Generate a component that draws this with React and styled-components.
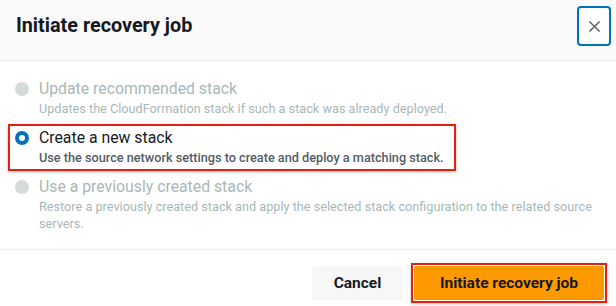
import React from "react";
import styled, { createGlobalStyle } from "styled-components";

const Global = createGlobalStyle`
  html, body { margin: 0; padding: 0; background: #ffffff; }
  body { font-family: Roboto, "Noto Sans", "Liberation Sans", sans-serif; -webkit-font-smoothing: antialiased; }
  * { box-sizing: border-box; }
`;

const Modal = styled.div`
  width: 616px;
  height: 306px;
  display: flex;
  flex-direction: column;
  background: #ffffff;
`;

const Header = styled.div`
  height: 61px;
  flex: none;
  display: flex;
  align-items: flex-start;
  justify-content: space-between;
  padding: 6px 5px 0 16px;
  background: #fafafa;
  border-bottom: 1px solid #eaeded;
`;

const Title = styled.h2`
  margin: 0;
  padding-top: 8px;
  font-size: 19.8px;
  line-height: 24px;
  font-weight: 700;
  color: #16191f;
`;

const CloseButton = styled.button`
  width: 34px;
  height: 40px;
  border: 2px solid #0073bb;
  border-radius: 4px;
  background: #ffffff;
  display: flex;
  align-items: center;
  justify-content: center;
  padding: 0;
  color: #545b64;
`;

const Body = styled.div`
  height: 189px;
  flex: none;
  display: flex;
  flex-direction: column;
  align-items: flex-start;
  gap: 2px;
  padding: 14px 10px 0 8px;
  border-bottom: 1px solid #eaeded;
`;

const Option = styled.div`
  display: flex;
  align-items: flex-start;
  gap: 10px;
  padding: 1px 10px 3px 5px;
  border: 2px solid ${(p) => (p.$highlight ? "#e8200f" : "transparent")};
  box-shadow: ${(p) => (p.$highlight ? "0 1px 3px rgba(0,0,0,0.25)" : "none")};
`;

const Radio = styled.span`
  flex: none;
  width: 14px;
  height: 14px;
  margin-top: 4px;
  border-radius: 50%;
  background: ${(p) => (p.$checked ? "#ffffff" : "#d5dbdb")};
  border: ${(p) => (p.$checked ? "4px solid #0073bb" : "none")};
`;

const Texts = styled.div`
  display: flex;
  flex-direction: column;
`;

const Label = styled.div`
  font-size: 15.8px;
  line-height: 22px;
  color: ${(p) => (p.$disabled ? "#aab7b8" : "#16191f")};
`;

const Desc = styled.div`
  font-size: 12.7px;
  line-height: 17px;
  max-width: 565px;
  color: ${(p) => (p.$disabled ? "#aab7b8" : "#545b64")};
  font-weight: ${(p) => (p.$disabled ? 400 : 500)};
`;

const Footer = styled.div`
  flex: 1;
  display: flex;
  align-items: center;
  justify-content: flex-end;
  gap: 8px;
  padding: 10px 9px 0 0;
`;

const CancelButton = styled.button`
  width: 91px;
  height: 34px;
  border: none;
  border-radius: 2px;
  background: #f7f7f7;
  font-family: inherit;
  font-size: 15.5px;
  font-weight: 700;
  color: #16191f;
`;

const Highlight = styled.div`
  padding: 1px;
  border: 2px solid #e8200f;
  background: #ffffff;
  box-shadow: 0 1px 3px rgba(0,0,0,0.25);
  display: flex;
`;

const PrimaryButton = styled.button`
  width: 190px;
  height: 34px;
  border: none;
  border-radius: 2px;
  background: #ff9900;
  font-family: inherit;
  font-size: 15.5px;
  font-weight: 700;
  color: #16191f;
`;

const options = [
  {
    label: "Update recommended stack",
    desc: "Updates the CloudFormation stack if such a stack was already deployed.",
    disabled: true,
  },
  {
    label: "Create a new stack",
    desc: "Use the source network settings to create and deploy a matching stack.",
    checked: true,
    highlight: true,
  },
  {
    label: "Use a previously created stack",
    desc: "Restore a previously created stack and apply the selected stack configuration to the related source servers.",
    disabled: true,
  },
];

export default function App() {
  return (
    <>
      <Global />
      <Modal>
        <Header>
          <Title>Initiate recovery job</Title>
          <CloseButton aria-label="Close">
            <svg width="13" height="13" viewBox="0 0 14 14" fill="none">
              <path d="M1.5 1.5 L12.5 12.5 M12.5 1.5 L1.5 12.5" stroke="#545b64" strokeWidth="1.5" />
            </svg>
          </CloseButton>
        </Header>
        <Body>
          {options.map((o) => (
            <Option key={o.label} $highlight={o.highlight}>
              <Radio $checked={o.checked} />
              <Texts>
                <Label $disabled={o.disabled}>{o.label}</Label>
                <Desc $disabled={o.disabled}>{o.desc}</Desc>
              </Texts>
            </Option>
          ))}
        </Body>
        <Footer>
          <CancelButton>Cancel</CancelButton>
          <Highlight>
            <PrimaryButton>Initiate recovery job</PrimaryButton>
          </Highlight>
        </Footer>
      </Modal>
    </>
  );
}
